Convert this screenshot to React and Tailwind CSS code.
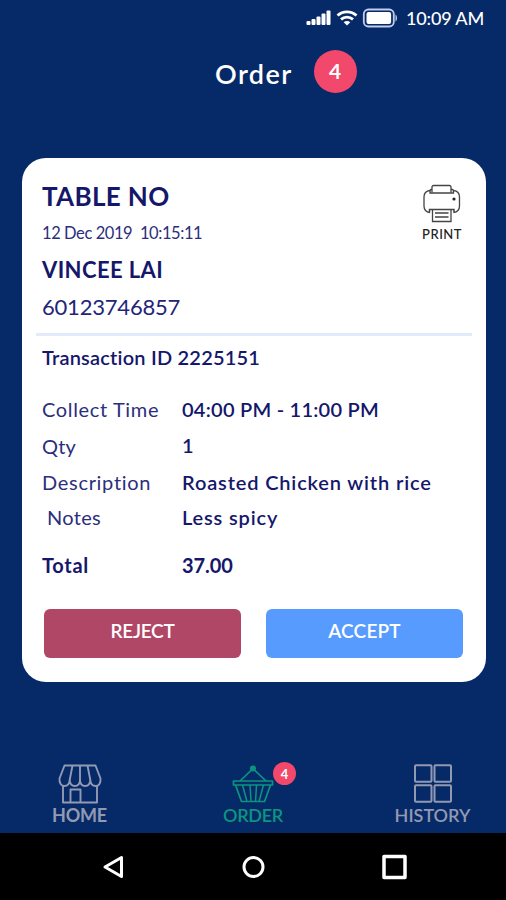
const details = [
  { label: "Collect Time", value: "04:00 PM - 11:00 PM", row: "h-[37px]", labelClass: "tracking-[0.65px]", valueClass: "tracking-[0.25px]" },
  { label: "Qty", value: "1", row: "h-[38px]", labelClass: "tracking-[0.2px]", valueClass: "pb-0.5" },
  { label: "Description", value: "Roasted Chicken with rice", row: "h-[33px]", labelClass: "tracking-[0.7px]", valueClass: "tracking-[0.85px]" },
  { label: "Notes", value: "Less spicy", row: "h-[37px]", labelClass: "pl-[5px] tracking-[0.3px]", valueClass: "tracking-[0.85px]" },
];

function StatusBar() {
  return (
    <div className="flex h-9 items-center pl-[306px] text-white">
      <svg width="26" height="16" viewBox="0 0 26 16" fill="currentColor">
        <rect x="0.5" y="11" width="4" height="4" rx="1" />
        <rect x="5.5" y="9" width="4" height="6" rx="1" />
        <rect x="10.5" y="6.5" width="4" height="8.5" rx="1" />
        <rect x="15.5" y="3.5" width="4" height="11.5" rx="1" />
        <rect x="20.5" y="0.5" width="4" height="14.5" rx="1" />
      </svg>
      <svg className="ml-1" width="22" height="16" viewBox="0 0 22 16" fill="none" stroke="currentColor" strokeWidth="2.8">
        <path d="M1.5 5.6C6.8 0.6 15.2 0.6 20.5 5.6" />
        <path d="M5 9.4c3.4-3.1 8.6-3.1 12 0" />
        <path d="M11 15.5l-3.3-3.3c1.9-1.6 4.700-1.600 6.600 0z" fill="currentColor" stroke="none" />
      </svg>
      <svg className="ml-1" width="37" height="20" viewBox="0 0 37 20" fill="none">
        <rect x="1.8" y="1.5" width="30" height="17" rx="4.5" stroke="#c3cbea" strokeWidth="1.8" />
        <rect x="4.5" y="4" width="24.6" height="12" rx="2" fill="white" />
        <path d="M33.5 6.500c2 1 2 6 0 7z" fill="#c3cbea" />
      </svg>
      <span className="ml-[7px] text-[18px] font-medium tracking-[-0.15px]">10:09 AM</span>
    </div>
  );
}

function PrinterIcon() {
  return (
    <svg width="38" height="40" viewBox="0 0 38 40" fill="none" stroke="#444" strokeWidth="1.3">
      <path d="M9 8.500V3a1.500 1.500 0 0 1 1.500-1.500h16A1.500 1.500 0 0 1 28 3v5.500" />
      <path d="M9 5.500H8c-1 0-1 1.500-1 3.500h23.500c0-2 0-3.500-1-3.500H28" />
      <path d="M7 6.500C3 7 1 9.500 1 13v9c0 4 2 6 6 6.500M30.500 6.500C34.500 7 36.500 9.500 36.500 13v9c0 4-2 6-6 6.500" />
      <path d="M6.500 28.500v-3h24.500v3" strokeWidth="1.5" />
      <path d="M9.500 25.500v12h18.500v-12" />
      <path d="M12 29h13.500M12 33h13.500" />
      <circle cx="31" cy="15" r="1.6" fill="#222" stroke="none" />
    </svg>
  );
}

function StoreIcon() {
  return (
    <svg width="44" height="40" viewBox="0 0 44 40" fill="none" stroke="currentColor" strokeWidth="1.9" strokeLinejoin="round">
      <path d="M6.500 1.500h31l5 13c.4 4.500-1.500 7.500-4.800 7.500-3 0-5.200-2.300-5.400-6-.2 3.700-2.100 6-5.100 6s-5.100-2.300-5.200-6c-.1 3.700-2.200 6-5.200 6s-4.900-2.300-5.100-6c-.2 3.700-2.400 6-5.400 6s-5.200-3-4.800-7.500z" />
      <path d="M14.500 1.500L11.700 16M22 1.500V16M29.500 1.500L32.300 16" />
      <path d="M5 22v16.500h34V22M12.500 38.500V25.500h10v13" />
    </svg>
  );
}

function BasketIcon() {
  return (
    <svg width="42" height="38" viewBox="0 0 42 38" fill="none" stroke="currentColor" strokeWidth="1.7" strokeLinejoin="round">
      <circle cx="21" cy="3.500" r="2.200" fill="currentColor" />
      <path d="M19.500 5L8 16M22.500 5L34 16" />
      <path d="M1.500 16h39v4h-39z" />
      <path d="M3.500 20l6 16.500h23l6-16.500" />
      <path d="M10.500 20l4.500 16.500M18 20l1 16.500M24.500 20l-1 16.500M31.500 20L27 36.500" strokeWidth="1.5" />
    </svg>
  );
}

function GridIcon() {
  return (
    <svg width="38" height="39" viewBox="0 0 38 39" fill="none" stroke="currentColor" strokeWidth="2">
      <rect x="1" y="1.3" width="16.500" height="16.500" rx="1" />
      <rect x="20.500" y="1.3" width="16.500" height="16.500" rx="1" />
      <rect x="1" y="21.300" width="16.500" height="16.500" rx="1" />
      <rect x="20.500" y="21.300" width="16.500" height="16.500" rx="1" />
    </svg>
  );
}

function OrderCard() {
  return (
    <section className="mt-[46px] ml-[22px] h-[524px] w-[464px] rounded-[24px] bg-white pt-[18px] text-[#15176b]">
      <div className="flex justify-between pr-6 pl-5">
        <div className="whitespace-pre">
          <h2 className="text-[26px] leading-[40px] font-bold tracking-[0.35px]">TABLE NO</h2>
          <p className="text-[16.5px] leading-[35px] tracking-[-0.42px] text-[#2c2e7c]">12 Dec 2019  10:15:11</p>
          <p className="text-[22px] leading-[37px] font-bold tracking-[0.4px]">VINCEE LAI</p>
          <p className="text-[22px] leading-[37px] tracking-[-0.2px] text-[#22247a]">60123746857</p>
        </div>
        <button className="mt-2 flex h-fit flex-col items-center text-[#222]">
          <PrinterIcon />
          <span className="mt-0.5 text-[13px] leading-4 font-medium tracking-[0.5px]">PRINT</span>
        </button>
      </div>
      <hr className="mx-3.5 mt-[8px] h-[3px] border-0 bg-[#e3eafa]" />
      <div className="px-5 text-[20px]">
        <p className="h-[43px] leading-[43px] font-semibold tracking-[0.2px]">Transaction ID 2225151</p>
        <dl className="mt-[11px]">
          {details.map((d) => (
            <div key={d.label} className={`flex items-center ${d.row}`}>
              <dt className={`w-[140px] text-[#2c2e7c] ${d.labelClass}`}>{d.label}</dt>
              <dd className={`font-semibold ${d.valueClass}`}>{d.value}</dd>
            </div>
          ))}
          <div className="mt-[11px] flex h-[37px] items-center font-bold">
            <dt className="w-[140px] tracking-[0.7px]">Total</dt>
            <dd className="tracking-[-0.1px]">37.00</dd>
          </div>
        </dl>
      </div>
      <div className="mt-[26px] flex gap-[25px] pl-[22px] text-[19px] font-semibold text-white">
        <button className="h-[49px] w-[197px] rounded-[6px] bg-[#b14766] pb-1 tracking-[-0.3px]">REJECT</button>
        <button className="h-[49px] w-[197px] rounded-[6px] bg-[#589bff] pb-1 tracking-[0.2px]">ACCEPT</button>
      </div>
    </section>
  );
}

function BottomNav() {
  return (
    <nav className="mt-auto flex h-[69px] justify-between pr-[35px] pl-[51px] text-[18px] leading-5 text-[#9299b2]">
      <div className="flex w-[57px] flex-col items-center">
        <StoreIcon />
        <span className="mt-px font-bold tracking-[-0.2px]">HOME</span>
      </div>
      <div className="relative ml-1 flex w-[62px] flex-col items-center text-[#0b9580]">
        <div className="h-10 pt-px"><BasketIcon /></div>
        <span className="mt-px font-semibold tracking-[-0.3px]">ORDER</span>
        <span className="absolute -top-[2px] left-[51px] flex size-[23px] items-center justify-center rounded-full bg-[#f2486b] text-[13px] font-bold text-white">4</span>
      </div>
      <div className="flex w-[77px] flex-col items-center">
        <div className="h-10"><GridIcon /></div>
        <span className="mt-px font-semibold">HISTORY</span>
      </div>
    </nav>
  );
}

export default function App() {
  return (
    <div className="flex h-[900px] w-[506px] flex-col overflow-hidden bg-[#062a67] font-['Lato','Open_Sans',sans-serif]">
      <StatusBar />
      <header className="flex h-[76px] items-center pl-[215px] text-white">
        <h1 className="text-[27px] font-semibold tracking-[1.4px]">Order</h1>
        <span className="mb-[6px] ml-[21px] flex size-[43px] items-center justify-center rounded-full bg-[#f2486b] text-[21px] font-bold">4</span>
      </header>
      <OrderCard />
      <BottomNav />
      <footer className="flex h-[67px] items-center bg-black text-white">
        <svg className="ml-[101px]" width="24" height="26" viewBox="0 0 24 26" fill="none" stroke="currentColor" strokeWidth="3" strokeLinejoin="round">
          <path d="M20.500 3.500v19L4 13z" />
        </svg>
        <svg className="ml-[116px]" width="26" height="26" viewBox="0 0 26 26" fill="none" stroke="currentColor" strokeWidth="3">
          <circle cx="12.5" cy="13" r="9.5" />
        </svg>
        <svg className="ml-[115px]" width="26" height="26" viewBox="0 0 26 26" fill="none" stroke="currentColor" strokeWidth="3.5" strokeLinejoin="round">
          <rect x="2" y="2.5" width="21" height="21" />
        </svg>
      </footer>
    </div>
  );
}
